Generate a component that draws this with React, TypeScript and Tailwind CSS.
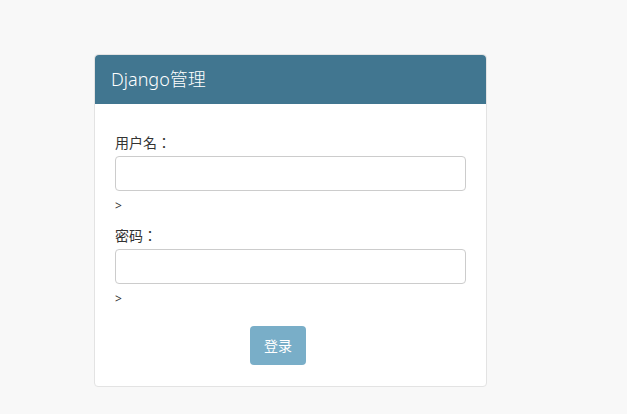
import React from 'react';

const font = { fontFamily: '"Noto Sans", "Noto Sans CJK SC", sans-serif' };
const labelFont = { fontFamily: '"Noto Sans CJK JP", "Noto Sans CJK SC", sans-serif' };

const Field: React.FC<{ label: string; type?: string }> = ({ label, type = 'text' }) => (
  <div>
    <label className="block text-[14px] leading-5 text-[#333] mb-1" style={labelFont}>
      {label}
    </label>
    <input
      type={type}
      className="block w-full h-[35px] rounded border border-[#ccc] bg-white px-3 outline-none"
    />
    <div className="text-[12px] leading-5 mt-[5px] text-[#333]">&gt;</div>
  </div>
);

export default function App() {
  return (
    <div className="min-h-screen bg-[#f8f8f8] pt-[54px] pl-[94px]" style={font}>
      <div className="w-[393px] bg-white border border-[#e3e3e3] rounded">
        <div className="h-[49px] bg-[#417690] px-4 flex items-center rounded-t">
          <h1 className="text-[18px] text-white font-light">Django管理</h1>
        </div>
        <form className="px-5 pt-[28px] pb-[21px]">
          <div className="space-y-[9px]">
            <Field label="用户名：" />
            <Field label="密码：" type="password" />
          </div>
          <div className="flex mt-[17px] pl-[135px]">
            <button
              type="button"
              className="w-[56px] h-[39px] rounded bg-[#79aec8] text-white text-[14px]"
            >
              登录
            </button>
          </div>
        </form>
      </div>
    </div>
  );
}
